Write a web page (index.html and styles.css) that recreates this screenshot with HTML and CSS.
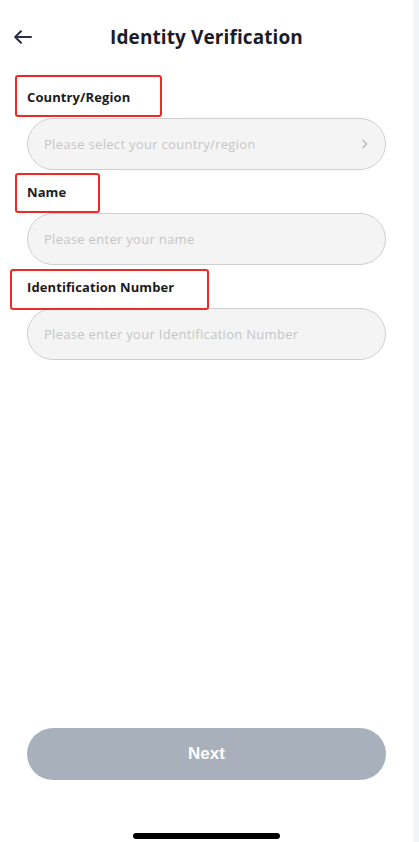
FILE: index.html
```html
<!DOCTYPE html>
<html lang="en">
<head>
<meta charset="utf-8">
<title>Identity Verification</title>
<link rel="stylesheet" href="styles.css">
</head>
<body>
<div class="screen">
  <main class="page">
    <header class="header">
      <button class="back" aria-label="Back">
        <svg width="18" height="14" viewBox="0 0 18 14" fill="none" stroke="#2b2f45" stroke-width="2" stroke-linecap="round" stroke-linejoin="round"><path d="M17 7H1.5M7 1.2L1.2 7L7 12.8"/></svg>
      </button>
      <h1 class="title">Identity Verification</h1>
    </header>
    <section class="form">
      <div class="field">
        <label class="label mark-1">Country/Region</label>
        <div class="input select">
          <span class="placeholder">Please select your country/region</span>
          <svg class="chev" width="6" height="10" viewBox="0 0 6 10" fill="none" stroke="#b9b9b9" stroke-width="1.4" stroke-linecap="round" stroke-linejoin="round"><path d="M1.2 1.5L4.5 5L1.2 8.5"/></svg>
        </div>
      </div>
      <div class="field">
        <label class="label mark-2">Name</label>
        <div class="input"><span class="placeholder">Please enter your name</span></div>
      </div>
      <div class="field">
        <label class="label mark-3">Identification Number</label>
        <div class="input"><span class="placeholder">Please enter your Identification Number</span></div>
      </div>
    </section>
    <div class="spacer"></div>
    <div class="actions">
      <button class="next">Next</button>
    </div>
    <div class="home-bar"><span class="indicator"></span></div>
  </main>
  <div class="edge"></div>
</div>
</body>
</html>
```

FILE: styles.css
```css
* { box-sizing: border-box; }
html, body { margin: 0; padding: 0; background: #fff; }
body { font-family: "Open Sans", "Liberation Sans", sans-serif; }

.screen { display: flex; width: 419px; height: 842px; overflow: hidden; }
.page { width: 413px; height: 842px; display: flex; flex-direction: column; background: #fff; }
.edge { flex: 1; background: #f3f4f6; }

.header { height: 74px; position: relative; display: flex; align-items: center; justify-content: center; }
.back { position: absolute; left: 14px; top: 30px; border: 0; background: none; padding: 0; width: 20px; height: 14px; display: flex; }
.title { margin: 0; font-size: 19px; font-weight: 700; color: #1c1c28; letter-spacing: 0.1px; }

.form { padding: 13px 27px 0 27px; display: flex; flex-direction: column; gap: 12px; }
.field { display: flex; flex-direction: column; gap: 11px; }
.label { position: relative; display: block; height: 20px; line-height: 20px; font-size: 13px; font-weight: 700; color: #1b1b22; letter-spacing: 0.1px; }
.label::before { content: ""; position: absolute; border: 2px solid #ee2a24; border-radius: 3px; }
.mark-1::before { left: -12px; top: -12px; width: 143px; height: 38px; }
.mark-2::before { left: -12px; top: -9px; width: 81px; height: 36px; }
.mark-3::before { left: -17px; top: -8px; width: 195px; height: 37px; }

.input { height: 52px; border: 1px solid #cfcfcf; border-radius: 26px; background: #f4f4f4; display: flex; align-items: center; padding: 0 17px 0 16px; }
.placeholder { flex: 1; font-size: 13px; color: #c6c6c6; letter-spacing: 0.3px; }
.chev { flex: none; }

.spacer { flex: 1; }
.actions { padding: 0 27px; }
.next { width: 100%; height: 52px; border: 0; border-radius: 26px; background: #a8b1bb; color: #fff; font-family: "Liberation Sans", Arial, sans-serif; font-weight: 700; font-size: 17px; }
.home-bar { height: 62px; display: flex; justify-content: center; align-items: flex-end; padding-bottom: 3px; }
.indicator { width: 147px; height: 6px; border-radius: 3px; background: #000; }
```
